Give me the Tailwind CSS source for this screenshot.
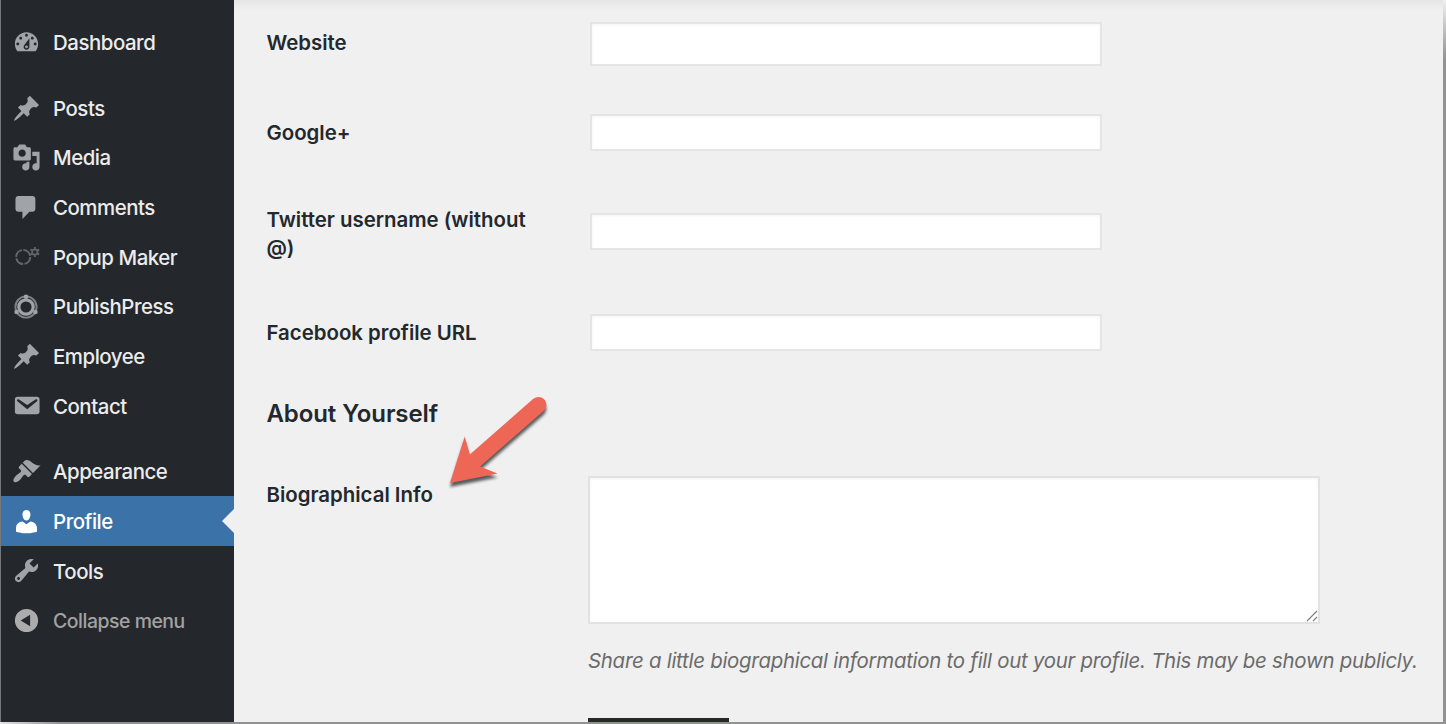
<!DOCTYPE html>
<html lang="en">
<head>
    <meta charset="UTF-8">
    <meta name="viewport" content="width=device-width, initial-scale=1.0">
    <title>Profile</title>
    <script src="https://cdn.jsdelivr.net/npm/@tailwindcss/browser@4"></script>
</head>
<body class="w-[1446px] h-[724px] overflow-hidden bg-[#929292] font-['Inter','Liberation_Sans',sans-serif]">
    <div class="relative flex w-[1443px] h-[722px] overflow-hidden bg-[#f0f0f0]">

        <!-- Admin menu -->
        <nav class="w-[234px] shrink-0 bg-[#24282d] border-l border-[#75787b] pt-[17.6px] text-[20.4px] font-medium text-[#ececec] tracking-[-0.45px]">
            <a class="flex items-center h-[49.65px] pl-[11px] gap-[12px]">
                <svg class="size-[29px] fill-[#a0a4a9]" viewBox="0 0 20 20"><path d="M3.76 16h12.48c1.1-1.37 1.76-3.11 1.76-5 0-4.42-3.58-8-8-8s-8 3.58-8 8c0 1.89.66 3.63 1.76 5zM10 4c.55 0 1 .45 1 1s-.45 1-1 1-1-.45-1-1 .45-1 1-1zM6 6c.55 0 1 .45 1 1s-.45 1-1 1-1-.45-1-1 .45-1 1-1zm8 0c.55 0 1 .45 1 1s-.45 1-1 1-1-.45-1-1 .45-1 1-1zm-5.37 5.55L12 7v6c0 1.1-.9 2-2 2s-2-.9-2-2c0-.57.24-1.08.63-1.45zM4 10c.55 0 1 .45 1 1s-.45 1-1 1-1-.45-1-1 .45-1 1-1zm12 0c.55 0 1 .45 1 1s-.45 1-1 1-1-.45-1-1 .45-1 1-1zm-5 3c0-.55-.45-1-1-1s-1 .45-1 1 .45 1 1 1 1-.45 1-1z"/></svg>
                <span class="pt-[2px]">Dashboard</span>
            </a>
            <a class="flex items-center h-[49.65px] pl-[11px] gap-[12px] mt-4">
                <svg class="size-[29px] fill-[#a0a4a9]" viewBox="0 0 20 20"><path d="M10.44 3.02l1.82-1.82 6.36 6.35-1.83 1.82c-1.05-.68-2.48-.57-3.41.36l-.75.75c-.92.93-1.04 2.35-.35 3.41l-1.83 1.82-2.41-2.41-2.8 2.79c-.42.42-3.38 2.71-3.8 2.29s1.86-3.39 2.28-3.81l2.79-2.79L4.1 9.36l1.83-1.82c1.05.69 2.48.57 3.4-.36l.75-.75c.93-.92 1.05-2.35.36-3.41z"/></svg>
                <span class="pt-[2px]">Posts</span>
            </a>
            <a class="flex items-center h-[49.65px] pl-[11px] gap-[12px]">
                <svg class="size-[29px] fill-[#a0a4a9]" viewBox="0 0 20 20"><path d="M13 11V4c0-.55-.45-1-1-1h-1.67L9 1H5L3.67 3H2c-.55 0-1 .45-1 1v7c0 .55.45 1 1 1h10c.55 0 1-.45 1-1zM7 4.5c1.38 0 2.5 1.12 2.5 2.5S8.38 9.5 7 9.5 4.5 8.38 4.5 7 5.62 4.5 7 4.5zM14 6h5v10.5c0 1.38-1.12 2.5-2.5 2.5S14 17.88 14 16.5s1.12-2.5 2.5-2.5c.17 0 .34.02.5.05V9h-3V6zm-4 8.05V13h2v3.5c0 1.38-1.12 2.5-2.5 2.5S7 17.88 7 16.5 8.12 14 9.5 14c.17 0 .34.02.5.05z"/></svg>
                <span class="pt-[2px]">Media</span>
            </a>
            <a class="flex items-center h-[49.65px] pl-[11px] gap-[12px]">
                <svg class="size-[29px] fill-[#a0a4a9]" viewBox="0 0 20 20"><path d="M4.300 2h9.900c1 0 1.900.9 1.900 1.900v7.200c0 1-.9 1.900-1.900 1.900h-2.200l-4.800 5v-5H4.300c-1 0-1.900-.9-1.900-1.900V3.900c0-1 .9-1.900 1.900-1.900z"/></svg>
                <span class="pt-[2px]">Comments</span>
            </a>
            <a class="flex items-center h-[49.65px] pl-[11px] gap-[12px]">
                <svg class="size-[29px] fill-none stroke-[#64686c]" viewBox="0 0 29 29">
                    <circle cx="11.200" cy="15" r="7" stroke-width="2" stroke-dasharray="9.500 1.500"/>
                    <circle cx="22.800" cy="10" r="2.700" stroke-width="1.700"/>
                    <path stroke-width="1.800" d="M22.800 5v1.800M22.800 13.200v1.800M18.400 7.500l1.600.9M25.600 11.600l1.600.9M18.400 12.500l1.600-.9M25.600 8.400l1.600-.9"/>
                </svg>
                <span class="pt-[2px]">Popup Maker</span>
            </a>
            <a class="flex items-center h-[49.65px] pl-[11px] gap-[12px]">
                <svg class="size-[29px]" viewBox="0 0 29 29">
                    <circle cx="14" cy="15" r="7.200" fill="none" stroke="#a0a4a9" stroke-width="3.200"/>
                    <circle cx="14" cy="15" r="10.600" fill="none" stroke="#7e8287" stroke-width="1.900"/>
                    <g fill="#a0a4a9"><circle cx="14" cy="4.800" r="2.300"/><circle cx="4.600" cy="20" r="2.300"/><circle cx="23.400" cy="20" r="2.300"/></g>
                </svg>
                <span class="pt-[2px]">PublishPress</span>
            </a>
            <a class="flex items-center h-[49.65px] pl-[11px] gap-[12px]">
                <svg class="size-[29px] fill-[#a0a4a9]" viewBox="0 0 20 20"><path d="M10.44 3.02l1.82-1.82 6.36 6.35-1.83 1.82c-1.05-.68-2.48-.57-3.41.36l-.75.75c-.92.93-1.04 2.35-.35 3.41l-1.83 1.82-2.41-2.41-2.8 2.79c-.42.42-3.38 2.71-3.8 2.29s1.86-3.39 2.28-3.81l2.79-2.79L4.1 9.36l1.83-1.82c1.05.69 2.48.57 3.4-.36l.75-.75c.93-.92 1.05-2.35.36-3.41z"/></svg>
                <span class="pt-[2px]">Employee</span>
            </a>
            <a class="flex items-center h-[49.65px] pl-[11px] gap-[12px]">
                <svg class="size-[29px] fill-[#a0a4a9]" viewBox="0 0 20 20"><path d="M3.87 4h13.25C18.37 4 19 4.59 19 5.79v8.42c0 1.19-.63 1.79-1.88 1.79H3.87c-1.25 0-1.88-.6-1.88-1.79V5.79c0-1.2.63-1.79 1.88-1.79zm6.62 8.6l6.74-5.53c.24-.2.43-.66.13-1.07-.29-.41-.82-.42-1.17-.17l-5.7 3.86L4.8 5.83c-.35-.25-.88-.24-1.17.17-.3.41-.11.87.13 1.07z"/></svg>
                <span class="pt-[2px]">Contact</span>
            </a>
            <a class="flex items-center h-[49.65px] pl-[11px] gap-[12px] mt-4">
                <svg class="size-[29px] fill-[#a0a4a9]" viewBox="0 0 20 20"><path d="M14.48 11.06L7.41 3.99l1.5-1.5c.5-.56 2.3-.47 3.51.32 1.21.8 1.43 1.28 2.91 2.1 1.18.64 2.45 1.26 4.45.85zm-.71.71L6.7 4.7 4.93 6.47c-.39.39-.39 1.02 0 1.41l1.06 1.06c.39.39.39 1.03 0 1.42-.6.6-1.43 1.11-2.21 1.69-.35.26-.7.53-1.01.84C1.43 14.23.4 16.08 1.4 17.07c.99 1 2.84-.03 4.18-1.36.31-.31.58-.66.85-1.02.57-.78 1.08-1.61 1.69-2.21.39-.39 1.02-.39 1.41 0l1.06 1.06c.39.39 1.02.39 1.41 0z"/></svg>
                <span class="pt-[2px]">Appearance</span>
            </a>
            <a class="relative flex items-center h-[49.65px] pl-[11px] gap-[12px] bg-[#3b72a8] text-white">
                <svg class="size-[29px] fill-white" viewBox="0 0 20 20"><path d="M10 9.25c-2.27 0-2.73-3.44-2.73-3.44C7 4.02 7.82 2 9.97 2c2.16 0 2.98 2.02 2.71 3.81 0 0-.41 3.44-2.68 3.44zm0 2.57L12.72 10c2.39 0 4.52 2.33 4.52 4.53v2.49s-3.65 1.13-7.24 1.13c-3.65 0-7.24-1.13-7.24-1.13v-2.49c0-2.25 1.94-4.48 4.47-4.48z"/></svg>
                <span class="pt-[2px]">Profile</span>
                <svg class="absolute right-0 top-[13px] w-[12px] h-[24px] fill-[#f0f0f0]" viewBox="0 0 12 24"><path d="M12 0v24L0 12z"/></svg>
            </a>
            <a class="flex items-center h-[49.65px] pl-[11px] gap-[12px]">
                <svg class="size-[29px] fill-[#a0a4a9]" viewBox="0 0 20 20"><path d="M16.68 9.77c-1.34 1.34-3.3 1.67-4.95.99l-5.41 6.52c-.99.99-2.59.99-3.58 0s-.99-2.59 0-3.57l6.52-5.42c-.68-1.65-.35-3.61.99-4.95 1.28-1.28 3.12-1.62 4.72-1.06l-2.89 2.89 2.82 2.82 2.86-2.87c.53 1.58.18 3.39-1.08 4.65zM3.81 16.21c.4.39 1.04.39 1.43 0 .4-.4.4-1.04 0-1.43-.39-.4-1.03-.4-1.43 0-.39.39-.39 1.03 0 1.43z"/></svg>
                <span class="pt-[2px]">Tools</span>
            </a>
            <a class="flex items-center h-[49.65px] pl-[11px] gap-[12px] text-[19.4px] text-[#a2a2a2]">
                <svg class="size-[29px] fill-[#acacac]" viewBox="0 0 20 20"><path fill-rule="evenodd" d="M10 2a8 8 0 1 1 0 16 8 8 0 0 1 0-16zm2.500 4v8L6 10z"/></svg>
                <span class="pt-[2px]">Collapse menu</span>
            </a>
        </nav>

        <!-- Profile form -->
        <main class="flex-1 pl-[32.500px] pt-[22px] text-[20.4px] leading-[28px] text-[#23282d]">
            <div class="flex h-[92px]">
                <label class="w-[323px] pt-[7px] font-semibold">Website</label>
                <input type="text" class="w-[512px] h-[44px] bg-white border-2 border-[#e5e5e5] shadow-[inset_0_1px_3px_#0000000c]">
            </div>
            <div class="flex h-[99px]">
                <label class="w-[323px] pt-[5px] font-semibold">Google+</label>
                <input type="text" class="w-[512px] h-[37px] bg-white border-2 border-[#e5e5e5] shadow-[inset_0_1px_3px_#0000000c]">
            </div>
            <div class="flex h-[101px]">
                <label class="w-[323px] -mt-[7.500px] pr-[50px] font-semibold">Twitter username (without @)</label>
                <input type="text" class="w-[512px] h-[37px] bg-white border-2 border-[#e5e5e5] shadow-[inset_0_1px_3px_#0000000c]">
            </div>
            <div class="flex h-[85px]">
                <label class="w-[323px] pt-[5px] font-semibold">Facebook profile URL</label>
                <input type="text" class="w-[512px] h-[37px] bg-white border-2 border-[#e5e5e5] shadow-[inset_0_1px_3px_#0000000c]">
            </div>
            <h2 class="h-[77px] pt-px text-[24px] font-semibold tracking-[-0.1px]">About Yourself</h2>
            <div class="flex">
                <label class="w-[321.500px] shrink-0 pt-[5px] font-semibold">Biographical Info</label>
                <div class="flex flex-col">
                    <div class="relative w-[732px] h-[148px]">
                        <textarea class="block w-full h-full resize-none bg-white border-2 border-[#e2e2e2] shadow-[inset_0_1px_3px_#0000000c]"></textarea>
                        <svg class="absolute right-[2px] bottom-[2px] size-[12px] stroke-[#828282]" viewBox="0 0 12 12"><path stroke-width="1.200" d="M1 11L11 1M7 11l4-4"/></svg>
                    </div>
                    <p class="mt-[22px] pt-px italic tracking-[-0.25px] text-[#6b6b6b] whitespace-nowrap">Share a little biographical information to fill out your profile. This may be shown publicly.</p>
                    <div class="mt-[43px] w-[141px] h-[10px] bg-[#222a22]"></div>
                </div>
            </div>
        </main>

        <!-- Shade under the toolbar -->
        <div class="absolute left-[234px] right-0 top-0 h-[10px] bg-linear-to-b from-[#e5e5e5] to-[#f0f0f0]"></div>

        <!-- Arrow pointing at the bio label -->
        <svg class="absolute left-[429.500px] top-[380px] w-[140px] h-[120px] drop-shadow-[0px_4px_1.5px_#000000a0]" viewBox="0 0 140 120">
            <path fill="#ee6756" d="M20 103L34.700 56.500L39.800 74.500L103 19Q107 16 111.500 17.500Q116.500 20 116.300 25.500Q116 29 113 31.500L50 86.500L67.500 93.500Z"/>
        </svg>
    </div>
    <div class="fixed right-0 top-0 w-[3px] h-[60px] bg-linear-to-b from-[#f0f0f0] to-[#929292]"></div>
    <div class="fixed left-0 bottom-0 w-[60px] h-[2px] bg-linear-to-r from-[#e4e4e4] to-[#929292]"></div>
</body>
</html>
